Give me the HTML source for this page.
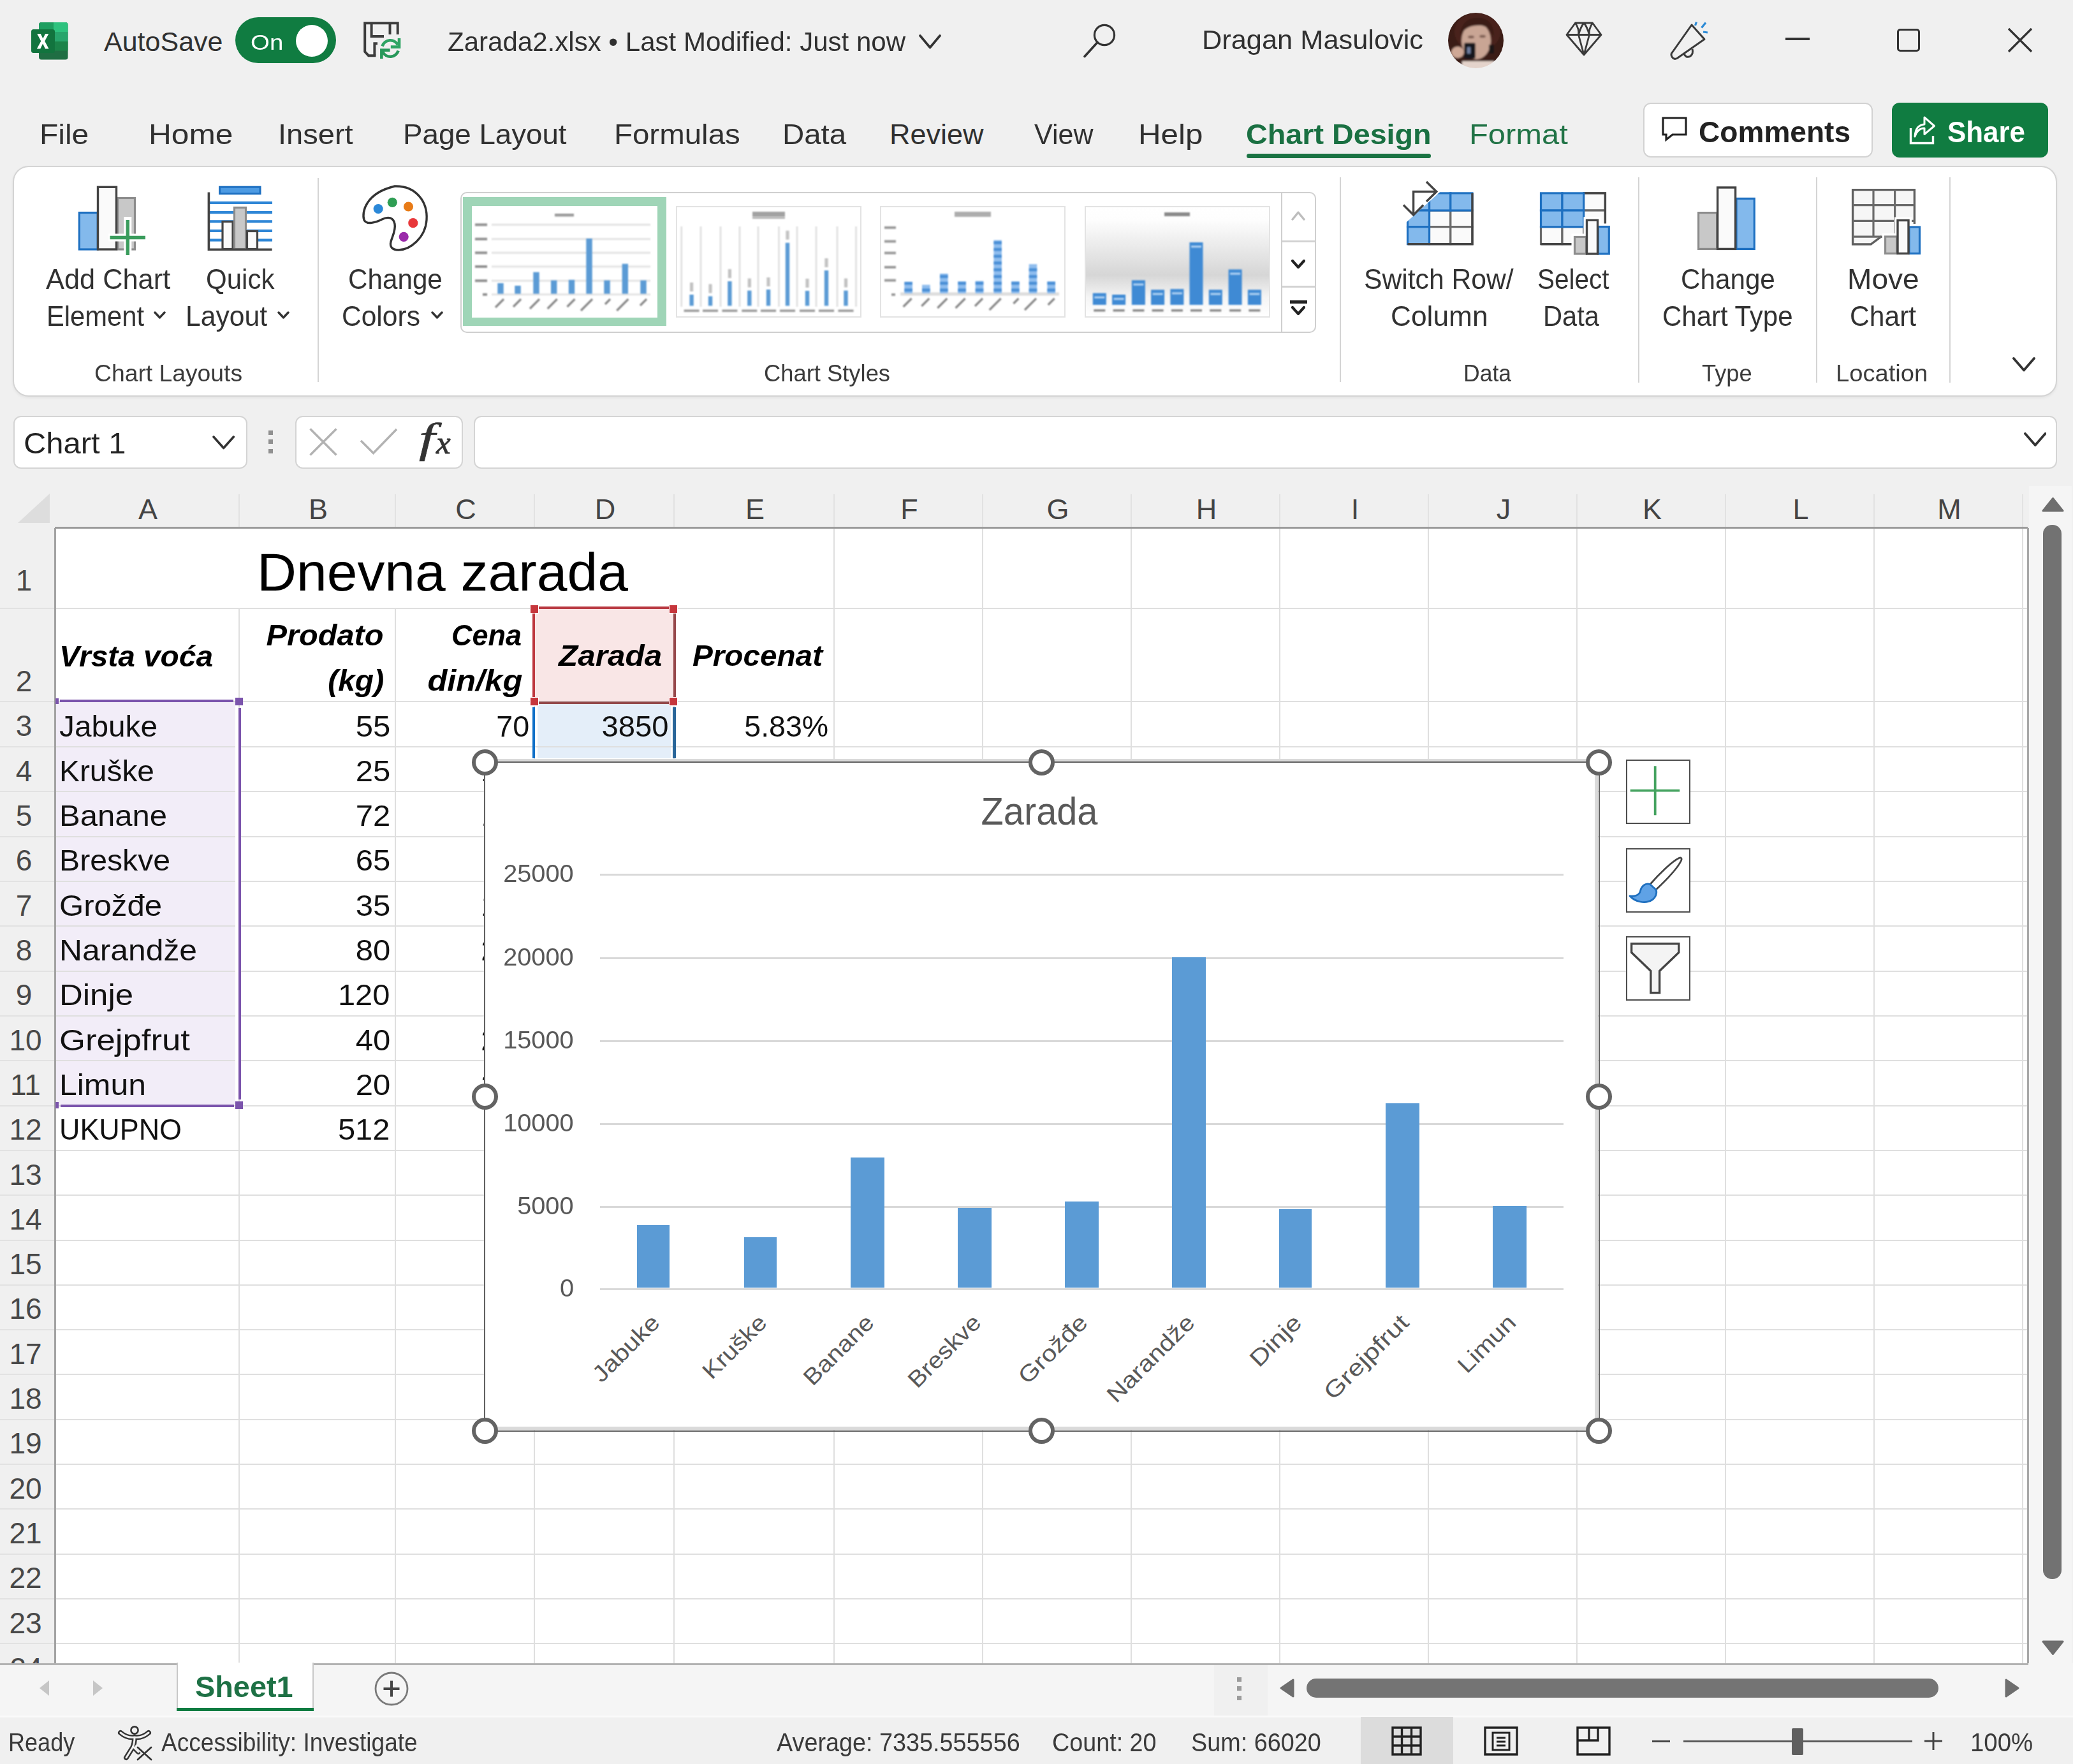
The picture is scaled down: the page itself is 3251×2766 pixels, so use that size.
<!DOCTYPE html>
<html><head><meta charset="utf-8"><title>Excel</title>
<style>
html,body{margin:0;padding:0;}
body{width:3251px;height:2766px;overflow:hidden;background:#f0f0f0;font-family:"Liberation Sans", sans-serif;position:relative;}
#root{position:absolute;left:0;top:0;width:3251px;height:2766px;overflow:hidden;}
#root div,#root svg{position:absolute;box-sizing:border-box;}
.t{position:absolute;white-space:nowrap;line-height:1em;}

</style></head><body><div id="root">
<svg style="left:48px;top:33.5px;" width="60" height="60" viewBox="0 0 60 60">
<path d="M17 1 H54.5 a4 4 0 0 1 4 4 V55.5 a4 4 0 0 1 -4 4 H17 a4 4 0 0 1 -4 -4 V5 a4 4 0 0 1 4 -4z" fill="#1f6e43"/>
<path d="M17 1 H36 V16 H13 V5 a4 4 0 0 1 4 -4z" fill="#1e9e60"/>
<path d="M36 1 H54.5 a4 4 0 0 1 4 4 V16 H36z" fill="#2ec27e"/>
<rect x="13" y="16" width="23" height="15" fill="#17874c"/>
<rect x="36" y="16" width="22.5" height="15" fill="#28a56c"/>
<rect x="13" y="31" width="23" height="14.5" fill="#136c3a"/>
<rect x="36" y="31" width="22.5" height="14.5" fill="#1b8349"/>
<rect x="1" y="12" width="37" height="37" rx="3.5" fill="#12743e"/>
<path d="M10.2 19 H15.8 L19.3 26.6 L23 19 H28.3 L22.2 30.5 L28.5 42.5 H23 L19.1 34.6 L15.3 42.5 H9.8 L16.3 30.4z" fill="#fff"/>
</svg><span class="t" id="t0" style="top:43.6px;font-size:43px;color:#303030;left:163.00px;">AutoSave</span><div style="left:369px;top:27px;width:158px;height:72px;border-radius:36px;background:#107c41;"></div><div style="left:464px;top:39px;width:50px;height:50px;border-radius:25px;background:#fff;"></div><span class="t" id="t1" style="top:49.2px;font-size:34px;color:#fff;left:392.87px;transform-origin:0 84.65%;transform:scaleX(1.1308);">On</span><svg style="left:569px;top:34px;" width="62" height="62" viewBox="0 0 62 62">
<path d="M54.7 20 V2.2 H3.2 V47 L9 53.2 H20.4" stroke="#3d3d3d" stroke-width="4" fill="none" stroke-linejoin="miter"/>
<path d="M13.6 2.2 V23 H33" stroke="#3d3d3d" stroke-width="4" fill="none"/>
<path d="M42.5 2.2 V20" stroke="#3d3d3d" stroke-width="4" fill="none"/>
<path d="M18.4 53.2 V34.3 H23" stroke="#3d3d3d" stroke-width="4" fill="none"/>
<path d="M30.6 38.5 A13.2 13.2 0 0 1 55 36.5" stroke="#2ea463" stroke-width="4.6" fill="none"/>
<path d="M57 26 V39.6 H43.8" stroke="#2ea463" stroke-width="4.6" fill="none"/>
<path d="M55.6 45.5 A13.2 13.2 0 0 1 31.2 47.5" stroke="#27985a" stroke-width="4.6" fill="none"/>
<path d="M29.4 58 V44.6 H42.6" stroke="#27985a" stroke-width="4.6" fill="none"/>
</svg><span class="t" id="t2" style="top:43.6px;font-size:43px;color:#303030;left:702.02px;transform-origin:0 84.65%;transform:scaleX(0.9777);">Zarada2.xlsx • Last Modified: Just now</span><svg style="left:1441px;top:53.5px;" width="35" height="24.5" viewBox="0 0 35 24.5"><path d="M2 2 L17.5 20.5 L33 2" stroke="#333" stroke-width="3.6" fill="none" stroke-linecap="round" stroke-linejoin="round"/></svg><svg style="left:1697px;top:33px;" width="56" height="58" viewBox="0 0 56 58"><circle cx="35" cy="22" r="15.6" stroke="#333" stroke-width="3.2" fill="none"/><path d="M24 33.5 L4 55.5" stroke="#333" stroke-width="3.6" stroke-linecap="round"/></svg><span class="t" id="t3" style="top:41.1px;font-size:43px;color:#303030;left:1885.47px;transform-origin:0 84.65%;transform:scaleX(1.0084);">Dragan Masulovic</span><svg style="left:2271.0px;top:19.700000000000003px;" width="87" height="87" viewBox="0 0 87 87"><defs><clipPath id="avc"><circle cx="43.5" cy="43.5" r="43.5"/></clipPath>
<filter id="avb"><feGaussianBlur stdDeviation="1.6"/></filter></defs>
<g clip-path="url(#avc)"><g filter="url(#avb)">
<rect x="-5" y="-5" width="97" height="97" fill="#3b1c18"/>
<ellipse cx="46" cy="30" rx="36" ry="30" fill="#4a241b"/>
<ellipse cx="44" cy="44" rx="23" ry="29" fill="#c9a594"/>
<path d="M18 36 Q22 6 48 8 Q72 8 72 40 Q64 18 46 20 Q28 20 18 36z" fill="#3a1b14"/>
<ellipse cx="36" cy="38" rx="5" ry="2.2" fill="#7a5a50"/><ellipse cx="54" cy="37" rx="5" ry="2.2" fill="#7a5a50"/>
<rect x="22" y="76" width="50" height="16" fill="#e4d3cb"/>
<ellipse cx="15" cy="62" rx="10" ry="9" fill="#cfa896"/>
<rect x="25" y="47" width="18" height="25" rx="3" fill="#15151d"/>
<rect x="30" y="54" width="5" height="10" fill="#6f7fa0"/>
<rect x="64" y="50" width="8" height="14" fill="#1d1414"/>
</g></g></svg><svg style="left:2455px;top:34px;" width="58" height="55" viewBox="0 0 58 55"><path d="M15.5 2 H42.5 L56 20.5 L29 52 L2 20.5 Z M2 20.5 H56 M15.5 2 Q22 12 20.5 20.5 L29 52 L37.5 20.5 Q36 12 42.5 2 M20.5 20.5 Q24 8 29 2 Q34 8 37.5 20.5" stroke="#3a3a3a" stroke-width="2.8" fill="none" stroke-linejoin="round"/></svg><svg style="left:2616px;top:28px;" width="70" height="70" viewBox="0 0 70 70"><path d="M37 11 L57 33.5 L14 63.5 Q9 66 6 61 Q3.5 57 7 53.5 Z" stroke="#3a3a3a" stroke-width="3" fill="none" stroke-linejoin="round"/>
<path d="M25 56 Q28 64 35 60 Q40 56 38 49" stroke="#3a3a3a" stroke-width="3" fill="none"/>
<path d="M42.5 12 L44.5 6.5 M52.5 15.5 L59 7.5 M55 22 L62 23" stroke="#2b8ad6" stroke-width="3.2" stroke-linecap="butt"/></svg><div style="left:2799.5px;top:59.4px;width:38px;height:3.4px;background:#333;"></div><div style="left:2975.3px;top:44.7px;width:35.4px;height:36.8px;border:3.2px solid #333;border-radius:5px;"></div><svg style="left:3146.8px;top:42.2px;" width="42" height="42" viewBox="0 0 42 42"><path d="M3 3 L39 39 M39 3 L3 39" stroke="#333" stroke-width="3.2" fill="none"/></svg><span class="t" id="t4" style="top:187.9px;font-size:45px;color:#303030;left:61.80px;transform-origin:0 84.65%;transform:scaleX(1.0660);">File</span><span class="t" id="t5" style="top:187.9px;font-size:45px;color:#303030;left:232.69px;transform-origin:0 84.65%;transform:scaleX(1.1034);">Home</span><span class="t" id="t6" style="top:187.9px;font-size:45px;color:#303030;left:435.82px;transform-origin:0 84.65%;transform:scaleX(1.0455);">Insert</span><span class="t" id="t7" style="top:187.9px;font-size:45px;color:#303030;left:631.95px;transform-origin:0 84.65%;transform:scaleX(1.0152);">Page Layout</span><span class="t" id="t8" style="top:187.9px;font-size:45px;color:#303030;left:962.84px;transform-origin:0 84.65%;transform:scaleX(1.0544);">Formulas</span><span class="t" id="t9" style="top:187.9px;font-size:45px;color:#303030;left:1226.84px;transform-origin:0 84.65%;transform:scaleX(1.0535);">Data</span><span class="t" id="t10" style="top:187.9px;font-size:45px;color:#303030;left:1395.00px;">Review</span><span class="t" id="t11" style="top:187.9px;font-size:45px;color:#303030;left:1622.00px;transform-origin:0 84.65%;transform:scaleX(0.9565);">View</span><span class="t" id="t12" style="top:187.9px;font-size:45px;color:#303030;left:1784.71px;transform-origin:0 84.65%;transform:scaleX(1.0958);">Help</span><span class="t" id="t13" style="top:187.9px;font-size:45px;color:#1a7042;font-weight:700;left:1953.96px;transform-origin:0 84.65%;transform:scaleX(1.0378);">Chart Design</span><div style="left:1955px;top:240.5px;width:289px;height:7px;background:#1a7343;border-radius:3.5px;"></div><span class="t" id="t14" style="top:187.9px;font-size:45px;color:#217346;left:2303.74px;transform-origin:0 84.65%;transform:scaleX(1.0856);">Format</span><div style="left:2577px;top:161px;width:360px;height:86px;background:#fff;border:2px solid #d2d2d2;border-radius:12px;"></div><svg style="left:2606px;top:183px;" width="42" height="40" viewBox="0 0 42 40"><path d="M2 2 H38 V28 H17 L7 36 V28 H2 Z" stroke="#222" stroke-width="3.2" fill="none" stroke-linejoin="miter"/></svg><span class="t" id="t15" style="top:182.7px;font-size:47px;color:#222;font-weight:700;left:2664.02px;transform-origin:0 84.65%;transform:scaleX(0.9803);">Comments</span><div style="left:2967px;top:161px;width:245px;height:86px;background:#107c41;border-radius:12px;"></div><svg style="left:2994px;top:181px;" width="44" height="48" viewBox="0 0 44 48"><path d="M2.5 20 V43.5 H37.5 V32" stroke="#fff" stroke-width="3.4" fill="none"/>
<path d="M9 33 Q10 15 24 14 V3 L39.5 16.5 L24 29.5 V20 Q13 20 9 33 Z" stroke="#fff" stroke-width="3" fill="none" stroke-linejoin="round"/></svg><span class="t" id="t16" style="top:182.7px;font-size:47px;color:#fff;font-weight:700;left:3054.37px;transform-origin:0 84.65%;transform:scaleX(0.9339);">Share</span><div style="left:20px;top:260px;width:3206.3px;height:362px;background:#fff;border:2px solid #d4d4d4;border-radius:25px;box-shadow:0 2px 4px rgba(0,0,0,0.06);"></div><svg style="left:115px;top:285px;" width="120" height="120" viewBox="115 285 120 120">
<rect x="184.5" y="310.5" width="27" height="80.5" fill="#c8c8c8" stroke="#8c8c8c" stroke-width="3.2"/>
<rect x="124.3" y="333.5" width="29" height="57.5" fill="#83b9ec" stroke="#1e70c1" stroke-width="3.2"/>
<rect x="153.5" y="293.3" width="29" height="97.7" fill="#fafafa" stroke="#444" stroke-width="3.4"/>
<path d="M200.3 340 V401 M170 372.5 H229" stroke="#fff" stroke-width="12" fill="none"/>
<path d="M200.3 345 V400 M172.5 372.5 H228" stroke="#3a9c5c" stroke-width="5.4" fill="none"/>
</svg><span class="t" id="t17" style="top:416.3px;font-size:44px;color:#323232;left:72.00px;transform-origin:0 84.65%;transform:scaleX(0.9854);">Add Chart</span><span class="t" id="t18" style="top:474.3px;font-size:44px;color:#323232;left:73.16px;transform-origin:0 84.65%;transform:scaleX(0.9482);">Element</span><svg style="left:241px;top:488px;" width="19" height="14" viewBox="0 0 19 14"><path d="M2 2 L9.5 10 L17 2" stroke="#333" stroke-width="3.4" fill="none" stroke-linecap="round" stroke-linejoin="round"/></svg><svg style="left:320px;top:285px;" width="115" height="115" viewBox="320 285 115 115"><rect x="329" y="315.8" width="98" height="4.2" fill="#2e86d6"/><rect x="329" y="331" width="98" height="4.2" fill="#2e86d6"/><rect x="329" y="345.2" width="98" height="4.2" fill="#2e86d6"/><rect x="329" y="359.8" width="98" height="4.2" fill="#2e86d6"/><rect x="329" y="374.4" width="98" height="4.2" fill="#2e86d6"/><rect x="344.5" y="293.2" width="63.5" height="10.5" fill="#4d9be3" stroke="#1e70c1" stroke-width="3"/><rect x="349" y="347.5" width="16" height="43" fill="#fafafa" stroke="#444" stroke-width="3.2"/><rect x="367.5" y="325.5" width="18" height="65" fill="#c8c8c8" stroke="#8c8c8c" stroke-width="3.2"/><rect x="387.5" y="362.5" width="16" height="28" fill="#fafafa" stroke="#444" stroke-width="3.2"/><path d="M327.4 301.5 V391.3 H426.6" stroke="#444" stroke-width="3.6" fill="none"/></svg><span class="t" id="t19" style="top:416.3px;font-size:44px;color:#323232;left:322.59px;transform-origin:0 84.65%;transform:scaleX(0.9554);">Quick</span><span class="t" id="t20" style="top:474.3px;font-size:44px;color:#323232;left:291.09px;transform-origin:0 84.65%;transform:scaleX(0.9699);">Layout</span><svg style="left:435px;top:488px;" width="19" height="14" viewBox="0 0 19 14"><path d="M2 2 L9.5 10 L17 2" stroke="#333" stroke-width="3.4" fill="none" stroke-linecap="round" stroke-linejoin="round"/></svg><span class="t" id="t21" style="top:567.5px;font-size:36px;color:#3b3b3b;left:147.96px;transform-origin:0 84.65%;transform:scaleX(1.0355);">Chart Layouts</span><div style="left:498px;top:279px;width:2px;height:320px;background:#d4d4d4;"></div><svg style="left:562px;top:287px;" width="112" height="112" viewBox="-5 -4 112 112">
<path d="M52 1 C86 0 104 26 102 54 C100 82 76 101 58 101 C48 101 44 96 46 88 C48 80 54 70 52 60 C50 50 42 48 32 53 C22 58 8 62 4 54 C0 42 6 12 52 1 Z" fill="#fff" stroke="#333" stroke-width="3.4" stroke-linejoin="round"/>
<circle cx="26.2" cy="36.5" r="7.6" fill="#2b88d8"/>
<circle cx="48.3" cy="26.3" r="7.6" fill="#2f9e54"/>
<circle cx="73.5" cy="33" r="7.6" fill="#e87b17"/>
<circle cx="80.8" cy="58.7" r="7.6" fill="#e8373a"/>
<circle cx="66.2" cy="80.3" r="7.6" fill="#9a2aaa"/>
</svg><span class="t" id="t22" style="top:416.3px;font-size:44px;color:#323232;left:545.58px;transform-origin:0 84.65%;transform:scaleX(0.9591);">Change</span><span class="t" id="t23" style="top:474.3px;font-size:44px;color:#323232;left:536.07px;transform-origin:0 84.65%;transform:scaleX(0.9666);">Colors</span><svg style="left:675.5px;top:488px;" width="19" height="14" viewBox="0 0 19 14"><path d="M2 2 L9.5 10 L17 2" stroke="#333" stroke-width="3.4" fill="none" stroke-linecap="round" stroke-linejoin="round"/></svg><div style="left:722px;top:301px;width:1342px;height:221px;background:#fff;border:2px solid #cfcfcf;border-radius:10px;"></div><div style="left:2009px;top:303px;width:2px;height:217px;background:#cfcfcf;"></div><div style="left:2010px;top:377px;width:53px;height:3px;background:#d2d2d2;"></div><div style="left:2010px;top:447.5px;width:53px;height:3px;background:#d2d2d2;"></div><svg style="left:2024.5px;top:331px;" width="22" height="17" viewBox="0 0 22 17"><path d="M2 13 L11.0 2 L20 13" stroke="#bdbdbd" stroke-width="3.4" fill="none" stroke-linecap="round" stroke-linejoin="round"/></svg><svg style="left:2024.5px;top:407px;" width="22" height="16" viewBox="0 0 22 16"><path d="M2 2 L11.0 12 L20 2" stroke="#222" stroke-width="4.2" fill="none" stroke-linecap="round" stroke-linejoin="round"/></svg><div style="left:2023px;top:470.5px;width:26.5px;height:5px;background:#222;"></div><svg style="left:2024.5px;top:480px;" width="22" height="16" viewBox="0 0 22 16"><path d="M2 2 L11.0 12 L20 2" stroke="#222" stroke-width="4.2" fill="none" stroke-linecap="round" stroke-linejoin="round"/></svg><div style="left:726px;top:309px;width:319px;height:202px;background:#9fd5b7;"></div><div style="left:740px;top:323px;width:291px;height:175px;background:#fff;"></div><svg style="left:740px;top:323px;filter:blur(1.3px);" width="291" height="175" viewBox="740 323 291 175"><rect x="870" y="335" width="30" height="4.5" fill="#9a9a9a"/><rect x="771" y="350.9" width="249" height="3" fill="#e3e3e3"/><rect x="771" y="373.3" width="249" height="3" fill="#e3e3e3"/><rect x="771" y="394.9" width="249" height="3" fill="#e3e3e3"/><rect x="771" y="416.5" width="249" height="3" fill="#e3e3e3"/><rect x="771" y="438.7" width="249" height="3" fill="#e3e3e3"/><rect x="771" y="460.3" width="249" height="3" fill="#e3e3e3"/><rect x="745" y="350.4" width="19" height="4" fill="#8f8f8f"/><rect x="745" y="372.8" width="19" height="4" fill="#8f8f8f"/><rect x="745" y="394.4" width="19" height="4" fill="#8f8f8f"/><rect x="745" y="416" width="19" height="4" fill="#8f8f8f"/><rect x="745" y="438.2" width="19" height="4" fill="#8f8f8f"/><rect x="757" y="459.8" width="7" height="4" fill="#8f8f8f"/><rect x="780.3" y="444" width="9.4" height="16.600000000000023" fill="#5b9bd5"/><path d="M790 469 l-13 13" stroke="#888" stroke-width="3.2"/><rect x="807.3" y="448" width="9.4" height="12.600000000000023" fill="#5b9bd5"/><path d="M817 469 l-12 12" stroke="#888" stroke-width="3.2"/><rect x="836.3" y="426.7" width="9.4" height="33.900000000000034" fill="#5b9bd5"/><path d="M846 469 l-15 15" stroke="#888" stroke-width="3.2"/><rect x="864.0" y="439.6" width="9.4" height="21.0" fill="#5b9bd5"/><path d="M873.7 469 l-15 15" stroke="#888" stroke-width="3.2"/><rect x="891.8" y="438.8" width="9.4" height="21.80000000000001" fill="#5b9bd5"/><path d="M901.5 469 l-12 12" stroke="#888" stroke-width="3.2"/><rect x="919.3" y="374" width="9.4" height="86.60000000000002" fill="#5b9bd5"/><path d="M929 469 l-18 18" stroke="#888" stroke-width="3.2"/><rect x="947.3" y="439.6" width="9.4" height="21.0" fill="#5b9bd5"/><path d="M957 469 l-8 8" stroke="#888" stroke-width="3.2"/><rect x="975.5999999999999" y="413.7" width="9.4" height="46.900000000000034" fill="#5b9bd5"/><path d="M985.3 469 l-18 18" stroke="#888" stroke-width="3.2"/><rect x="1004.3" y="439.6" width="9.4" height="21.0" fill="#5b9bd5"/><path d="M1014 469 l-10 10" stroke="#888" stroke-width="3.2"/></svg><div style="left:1060px;top:323px;width:291px;height:175px;background:#fff;border:2px solid #e3e3e3;"></div><svg style="left:1060px;top:323px;filter:blur(1.3px);" width="291" height="175" viewBox="1060 323 291 175"><rect x="1180" y="332" width="51" height="8" fill="#a2a2a2"/><rect x="1180" y="341" width="51" height="1.6" fill="#8a8a8a"/><rect x="1067.4" y="355" width="2.6" height="126" fill="#dedede"/><rect x="1097.7" y="355" width="2.6" height="126" fill="#dedede"/><rect x="1128.7" y="355" width="2.6" height="126" fill="#dedede"/><rect x="1158.7" y="355" width="2.6" height="126" fill="#dedede"/><rect x="1187.7" y="355" width="2.6" height="126" fill="#dedede"/><rect x="1220.2" y="355" width="2.6" height="126" fill="#dedede"/><rect x="1248.7" y="355" width="2.6" height="126" fill="#dedede"/><rect x="1278.7" y="355" width="2.6" height="126" fill="#dedede"/><rect x="1311.7" y="355" width="2.6" height="126" fill="#dedede"/><rect x="1341.2" y="355" width="2.6" height="126" fill="#dedede"/><rect x="1081.3999999999999" y="462" width="6.4" height="17.5" fill="#5b9bd5"/><rect x="1082.0" y="443" width="5.2" height="14" fill="#c2c2c2"/><rect x="1072.6" y="485.5" width="24" height="3.6" fill="#9a9a9a"/><rect x="1110.8" y="464.5" width="6.4" height="15.0" fill="#5b9bd5"/><rect x="1111.4" y="445.5" width="5.2" height="14" fill="#c2c2c2"/><rect x="1102" y="485.5" width="24" height="3.6" fill="#9a9a9a"/><rect x="1141.2" y="441" width="6.4" height="38.5" fill="#5b9bd5"/><rect x="1141.8000000000002" y="422" width="5.2" height="14" fill="#c2c2c2"/><rect x="1132.4" y="485.5" width="24" height="3.6" fill="#9a9a9a"/><rect x="1172.1" y="455.6" width="6.4" height="23.899999999999977" fill="#5b9bd5"/><rect x="1172.7" y="436.6" width="5.2" height="14" fill="#c2c2c2"/><rect x="1163.3" y="485.5" width="24" height="3.6" fill="#9a9a9a"/><rect x="1201.8" y="454" width="6.4" height="25.5" fill="#5b9bd5"/><rect x="1202.4" y="435" width="5.2" height="14" fill="#c2c2c2"/><rect x="1193" y="485.5" width="24" height="3.6" fill="#9a9a9a"/><rect x="1231.8" y="380.7" width="6.4" height="98.80000000000001" fill="#5b9bd5"/><rect x="1232.4" y="361.7" width="5.2" height="14" fill="#c2c2c2"/><rect x="1223" y="485.5" width="24" height="3.6" fill="#9a9a9a"/><rect x="1262.8" y="456" width="6.4" height="23.5" fill="#5b9bd5"/><rect x="1263.4" y="437" width="5.2" height="14" fill="#c2c2c2"/><rect x="1254" y="485.5" width="24" height="3.6" fill="#9a9a9a"/><rect x="1292.8" y="424" width="6.4" height="55.5" fill="#5b9bd5"/><rect x="1293.4" y="405" width="5.2" height="14" fill="#c2c2c2"/><rect x="1284" y="485.5" width="24" height="3.6" fill="#9a9a9a"/><rect x="1323.3" y="455.6" width="6.4" height="23.899999999999977" fill="#5b9bd5"/><rect x="1323.9" y="436.6" width="5.2" height="14" fill="#c2c2c2"/><rect x="1314.5" y="485.5" width="24" height="3.6" fill="#9a9a9a"/></svg><div style="left:1380px;top:323px;width:291px;height:175px;background:#fff;border:2px solid #e3e3e3;"></div><svg style="left:1380px;top:323px;filter:blur(1.3px);" width="291" height="175" viewBox="1380 323 291 175"><rect x="1497" y="332" width="57" height="8" fill="#adadad"/><rect x="1387" y="354.9" width="18" height="4" fill="#9a9a9a"/><rect x="1387" y="376.5" width="18" height="4" fill="#9a9a9a"/><rect x="1387" y="394.7" width="18" height="4" fill="#9a9a9a"/><rect x="1387" y="417" width="18" height="4" fill="#9a9a9a"/><rect x="1387" y="437.6" width="18" height="4" fill="#9a9a9a"/><rect x="1398" y="460" width="6" height="4" fill="#9a9a9a"/><rect x="1412" y="458.5" width="249" height="5" fill="#dcdcdc"/><rect x="1418.3" y="444.4" width="12.6" height="15.600000000000023" fill="#8fbdee"/><rect x="1418.3" y="452.5" width="12.6" height="4.6" fill="#4a8fd6"/><rect x="1418.3" y="441.9" width="12.6" height="4.6" fill="#4a8fd6"/><path d="M1429.6 468 l-13 13" stroke="#888" stroke-width="3.2"/><rect x="1446.0" y="446.6" width="12.6" height="13.399999999999977" fill="#8fbdee"/><rect x="1446.0" y="452.5" width="12.6" height="4.6" fill="#4a8fd6"/><path d="M1457.3 468 l-12 12" stroke="#888" stroke-width="3.2"/><rect x="1474.0" y="429" width="12.6" height="31" fill="#8fbdee"/><rect x="1474.0" y="452.5" width="12.6" height="4.6" fill="#4a8fd6"/><rect x="1474.0" y="441.9" width="12.6" height="4.6" fill="#4a8fd6"/><rect x="1474.0" y="431.29999999999995" width="12.6" height="4.6" fill="#4a8fd6"/><path d="M1485.3 468 l-15 15" stroke="#888" stroke-width="3.2"/><rect x="1502.3" y="441.2" width="12.6" height="18.80000000000001" fill="#8fbdee"/><rect x="1502.3" y="452.5" width="12.6" height="4.6" fill="#4a8fd6"/><rect x="1502.3" y="441.9" width="12.6" height="4.6" fill="#4a8fd6"/><path d="M1513.6 468 l-15 15" stroke="#888" stroke-width="3.2"/><rect x="1529.7" y="440.6" width="12.6" height="19.399999999999977" fill="#8fbdee"/><rect x="1529.7" y="452.5" width="12.6" height="4.6" fill="#4a8fd6"/><rect x="1529.7" y="441.9" width="12.6" height="4.6" fill="#4a8fd6"/><path d="M1541 468 l-12 12" stroke="#888" stroke-width="3.2"/><rect x="1558.4" y="376.6" width="12.6" height="83.39999999999998" fill="#8fbdee"/><rect x="1558.4" y="452.5" width="12.6" height="4.6" fill="#4a8fd6"/><rect x="1558.4" y="441.9" width="12.6" height="4.6" fill="#4a8fd6"/><rect x="1558.4" y="431.29999999999995" width="12.6" height="4.6" fill="#4a8fd6"/><rect x="1558.4" y="420.69999999999993" width="12.6" height="4.6" fill="#4a8fd6"/><rect x="1558.4" y="410.0999999999999" width="12.6" height="4.6" fill="#4a8fd6"/><rect x="1558.4" y="399.4999999999999" width="12.6" height="4.6" fill="#4a8fd6"/><rect x="1558.4" y="388.89999999999986" width="12.6" height="4.6" fill="#4a8fd6"/><rect x="1558.4" y="378.29999999999984" width="12.6" height="4.6" fill="#4a8fd6"/><path d="M1569.7 468 l-18 18" stroke="#888" stroke-width="3.2"/><rect x="1586.1000000000001" y="441.2" width="12.6" height="18.80000000000001" fill="#8fbdee"/><rect x="1586.1000000000001" y="452.5" width="12.6" height="4.6" fill="#4a8fd6"/><rect x="1586.1000000000001" y="441.9" width="12.6" height="4.6" fill="#4a8fd6"/><path d="M1597.4 468 l-8 8" stroke="#888" stroke-width="3.2"/><rect x="1613.7" y="414.2" width="12.6" height="45.80000000000001" fill="#8fbdee"/><rect x="1613.7" y="452.5" width="12.6" height="4.6" fill="#4a8fd6"/><rect x="1613.7" y="441.9" width="12.6" height="4.6" fill="#4a8fd6"/><rect x="1613.7" y="431.29999999999995" width="12.6" height="4.6" fill="#4a8fd6"/><rect x="1613.7" y="420.69999999999993" width="12.6" height="4.6" fill="#4a8fd6"/><path d="M1625 468 l-18 18" stroke="#888" stroke-width="3.2"/><rect x="1642.4" y="441.2" width="12.6" height="18.80000000000001" fill="#8fbdee"/><rect x="1642.4" y="452.5" width="12.6" height="4.6" fill="#4a8fd6"/><rect x="1642.4" y="441.9" width="12.6" height="4.6" fill="#4a8fd6"/><path d="M1653.7 468 l-10 10" stroke="#888" stroke-width="3.2"/></svg><div style="left:1701px;top:323px;width:291px;height:175px;background:linear-gradient(#fff 0%,#fdfdfd 12%,#d6d6d6 62%,#f4f4f4 82%,#fff 100%);border:2px solid #e3e3e3;"></div><svg style="left:1701px;top:323px;filter:blur(1.3px);" width="291" height="175" viewBox="1701 323 291 175"><rect x="1826" y="333" width="40" height="6" fill="#8a8a8a"/><rect x="1713.8" y="459.6" width="21" height="18.399999999999977" fill="#3f8ad4"/><rect x="1716.3" y="464.6" width="16" height="3.4" fill="#a9cdf1"/><rect x="1715.3" y="485" width="18" height="3.6" fill="#8a8a8a"/><rect x="1744.1" y="462" width="21" height="16" fill="#3f8ad4"/><rect x="1746.6" y="467" width="16" height="3.4" fill="#a9cdf1"/><rect x="1745.6" y="485" width="18" height="3.6" fill="#8a8a8a"/><rect x="1774.9" y="439.4" width="21" height="38.60000000000002" fill="#3f8ad4"/><rect x="1777.4" y="444.4" width="16" height="3.4" fill="#a9cdf1"/><rect x="1776.4" y="485" width="18" height="3.6" fill="#8a8a8a"/><rect x="1805.1" y="454.3" width="21" height="23.69999999999999" fill="#3f8ad4"/><rect x="1807.6" y="459.3" width="16" height="3.4" fill="#a9cdf1"/><rect x="1806.6" y="485" width="18" height="3.6" fill="#8a8a8a"/><rect x="1835.4" y="453.2" width="21" height="24.80000000000001" fill="#3f8ad4"/><rect x="1837.9" y="458.2" width="16" height="3.4" fill="#a9cdf1"/><rect x="1836.9" y="485" width="18" height="3.6" fill="#8a8a8a"/><rect x="1865.5" y="380" width="21" height="98" fill="#3f8ad4"/><rect x="1868" y="385" width="16" height="3.4" fill="#a9cdf1"/><rect x="1867" y="485" width="18" height="3.6" fill="#8a8a8a"/><rect x="1895.8" y="454.3" width="21" height="23.69999999999999" fill="#3f8ad4"/><rect x="1898.3" y="459.3" width="16" height="3.4" fill="#a9cdf1"/><rect x="1897.3" y="485" width="18" height="3.6" fill="#8a8a8a"/><rect x="1926.6" y="422.5" width="21" height="55.5" fill="#3f8ad4"/><rect x="1929.1" y="427.5" width="16" height="3.4" fill="#a9cdf1"/><rect x="1928.1" y="485" width="18" height="3.6" fill="#8a8a8a"/><rect x="1956.9" y="454.3" width="21" height="23.69999999999999" fill="#3f8ad4"/><rect x="1959.4" y="459.3" width="16" height="3.4" fill="#a9cdf1"/><rect x="1958.4" y="485" width="18" height="3.6" fill="#8a8a8a"/></svg><span class="t" id="t24" style="top:567.5px;font-size:36px;color:#3b3b3b;left:1197.99px;transform-origin:0 84.65%;transform:scaleX(1.0100);">Chart Styles</span><div style="left:2101px;top:278px;width:2px;height:321px;background:#d4d4d4;"></div><svg style="left:2190px;top:280px;" width="130" height="110" viewBox="2190 280 130 110"><rect x="2241.5" y="330" width="33.30000000000018" height="25.69999999999999" fill="#fafafa" stroke="#6a6a6a" stroke-width="3.2"/><rect x="2274.8" y="330" width="34.19999999999982" height="25.69999999999999" fill="#fafafa" stroke="#6a6a6a" stroke-width="3.2"/><rect x="2241.5" y="355.7" width="33.30000000000018" height="27.0" fill="#fafafa" stroke="#6a6a6a" stroke-width="3.2"/><rect x="2274.8" y="355.7" width="34.19999999999982" height="27.0" fill="#fafafa" stroke="#6a6a6a" stroke-width="3.2"/><rect x="2241.5" y="302.9" width="33.30000000000018" height="27.100000000000023" fill="#83b9ec" stroke="#1e70c1" stroke-width="3.2"/><rect x="2274.8" y="302.9" width="34.19999999999982" height="27.100000000000023" fill="#83b9ec" stroke="#1e70c1" stroke-width="3.2"/><rect x="2207.5" y="302.9" width="34.0" height="27.100000000000023" fill="#83b9ec" stroke="#1e70c1" stroke-width="3.2"/><rect x="2207.5" y="330" width="34.0" height="25.69999999999999" fill="#83b9ec" stroke="#1e70c1" stroke-width="3.2"/><rect x="2207.5" y="355.7" width="34.0" height="27.0" fill="#83b9ec" stroke="#1e70c1" stroke-width="3.2"/><path d="M2207.5 382.7 H2309 V302.9" stroke="#444" stroke-width="3.4" fill="none"/><path d="M2195 358 L2266 294 L2266 270 L2185 270 L2185 358 Z" fill="#fff"/><path d="M2216.6 336 V300.5 H2252" stroke="#444" stroke-width="3.4" fill="none"/><path d="M2201 321.5 L2216.6 337 L2232.2 321.5 M2237 285 L2252.8 300.5 L2237 316" stroke="#444" stroke-width="3.4" fill="none"/></svg><span class="t" id="t25" style="top:416.3px;font-size:44px;color:#323232;left:2138.56px;transform-origin:0 84.65%;transform:scaleX(0.9695);">Switch Row/</span><span class="t" id="t26" style="top:474.3px;font-size:44px;color:#323232;left:2181.49px;transform-origin:0 84.65%;transform:scaleX(1.0058);">Column</span><svg style="left:2405px;top:290px;" width="130" height="120" viewBox="2405 290 130 120"><rect x="2483.6" y="302.9" width="33.80000000000018" height="27.100000000000023" fill="#fafafa" stroke="#6a6a6a" stroke-width="3.2"/><rect x="2483.6" y="330" width="33.80000000000018" height="25.69999999999999" fill="#fafafa" stroke="#6a6a6a" stroke-width="3.2"/><rect x="2416.5" y="355.7" width="33.5" height="27.0" fill="#fafafa" stroke="#6a6a6a" stroke-width="3.2"/><rect x="2450" y="355.7" width="33.59999999999991" height="27.0" fill="#fafafa" stroke="#6a6a6a" stroke-width="3.2"/><rect x="2483.6" y="355.7" width="33.80000000000018" height="27.0" fill="#fafafa" stroke="#6a6a6a" stroke-width="3.2"/><path d="M2416.5 382.7 H2517.4 V302.9 H2483" stroke="#444" stroke-width="3.4" fill="none"/><rect x="2416.5" y="302.9" width="33.5" height="27.100000000000023" fill="#83b9ec" stroke="#1e70c1" stroke-width="3.2"/><rect x="2450" y="302.9" width="33.59999999999991" height="27.100000000000023" fill="#83b9ec" stroke="#1e70c1" stroke-width="3.2"/><rect x="2416.5" y="330" width="33.5" height="25.69999999999999" fill="#83b9ec" stroke="#1e70c1" stroke-width="3.2"/><rect x="2450" y="330" width="33.59999999999991" height="25.69999999999999" fill="#83b9ec" stroke="#1e70c1" stroke-width="3.2"/><path d="M2464.5 402 V366.5 H2483.5 V340.3 H2510.5 V350.5 H2529 V402 Z" fill="#fff"/><rect x="2469.5" y="371.5" width="18" height="26.5" fill="#c8c8c8" stroke="#8c8c8c" stroke-width="3.2"/><rect x="2506.3" y="355.5" width="17" height="42.5" fill="#83b9ec" stroke="#1e70c1" stroke-width="3.2"/><rect x="2488.5" y="345.3" width="17" height="52.7" fill="#fafafa" stroke="#444" stroke-width="3.4"/></svg><span class="t" id="t27" style="top:416.3px;font-size:44px;color:#323232;left:2410.66px;transform-origin:0 84.65%;transform:scaleX(0.9203);">Select</span><span class="t" id="t28" style="top:474.3px;font-size:44px;color:#323232;left:2420.16px;transform-origin:0 84.65%;transform:scaleX(0.9451);">Data</span><span class="t" id="t29" style="top:568.0px;font-size:36px;color:#3b3b3b;left:2294.53px;transform-origin:0 84.65%;transform:scaleX(0.9864);">Data</span><div style="left:2569px;top:278px;width:2px;height:322px;background:#d4d4d4;"></div><svg style="left:2655px;top:285px;" width="105" height="115" viewBox="2655 285 105 115">
<rect x="2663.6" y="333.6" width="29" height="56.8" fill="#c8c8c8" stroke="#8c8c8c" stroke-width="3.2"/>
<rect x="2723" y="311.4" width="28.3" height="79" fill="#83b9ec" stroke="#1e70c1" stroke-width="3.2"/>
<rect x="2693.6" y="294" width="28" height="96.4" fill="#fafafa" stroke="#444" stroke-width="3.4"/>
</svg><span class="t" id="t30" style="top:416.3px;font-size:44px;color:#323232;left:2635.58px;transform-origin:0 84.65%;transform:scaleX(0.9591);">Change</span><span class="t" id="t31" style="top:474.3px;font-size:44px;color:#323232;left:2607.09px;transform-origin:0 84.65%;transform:scaleX(0.9540);">Chart Type</span><span class="t" id="t32" style="top:567.5px;font-size:36px;color:#3b3b3b;left:2668.50px;transform-origin:0 84.65%;transform:scaleX(1.0062);">Type</span><div style="left:2848px;top:278px;width:2px;height:322px;background:#d4d4d4;"></div><svg style="left:2895px;top:288px;" width="125" height="120" viewBox="2895 288 125 120"><path d="M2905.6 297.6 H3002.4 V371.2 H2950 L2934 383 H2905.6 Z" fill="#f6f6f6" stroke="#5f5f5f" stroke-width="3.4"/><path d="M2905.6 321.6 H3002.4 M2905.6 346.4 H3002.4 M2905.6 371.2 H2950 M2938 297.6 V371.2 M2971.6 297.6 V371.2" stroke="#6a6a6a" stroke-width="3.2" fill="none"/><path d="M2951.6 402 V366 H2971 V340.5 H2998 V351 H3015.5 V402 Z" fill="#fff"/><rect x="2956.6" y="371" width="18" height="26.5" fill="#c8c8c8" stroke="#8c8c8c" stroke-width="3.2"/><rect x="2994" y="356" width="16.5" height="41.5" fill="#83b9ec" stroke="#1e70c1" stroke-width="3.2"/><rect x="2976" y="345.5" width="17" height="52" fill="#fafafa" stroke="#444" stroke-width="3.4"/></svg><span class="t" id="t33" style="top:416.3px;font-size:44px;color:#323232;left:2896.86px;transform-origin:0 84.65%;transform:scaleX(1.0473);">Move</span><span class="t" id="t34" style="top:474.3px;font-size:44px;color:#323232;left:2901.06px;transform-origin:0 84.65%;transform:scaleX(0.9680);">Chart</span><span class="t" id="t35" style="top:567.5px;font-size:36px;color:#3b3b3b;left:2878.88px;transform-origin:0 84.65%;transform:scaleX(1.0599);">Location</span><div style="left:3056.5px;top:278px;width:2px;height:322px;background:#d4d4d4;"></div><svg style="left:3155.5px;top:559.5px;" width="36" height="24.5" viewBox="0 0 36 24.5"><path d="M2 2 L18.0 20.5 L34 2" stroke="#333" stroke-width="3.8" fill="none" stroke-linecap="round" stroke-linejoin="round"/></svg><div style="left:21px;top:652px;width:366.5px;height:83px;background:#fff;border:2px solid #d4d4d4;border-radius:12px;"></div><span class="t" id="t36" style="top:671.6px;font-size:46.5px;color:#222;left:36.90px;transform-origin:0 84.65%;transform:scaleX(1.0516);">Chart 1</span><svg style="left:332.8px;top:683.3px;" width="35.3" height="23.5" viewBox="0 0 35.3 23.5"><path d="M2 2 L17.65 19.5 L33.3 2" stroke="#333" stroke-width="3.6" fill="none" stroke-linecap="round" stroke-linejoin="round"/></svg><div style="left:421.3px;top:674.5px;width:7px;height:7px;background:#909090;"></div><div style="left:421.3px;top:689.1px;width:7px;height:7px;background:#909090;"></div><div style="left:421.3px;top:703.9px;width:7px;height:7px;background:#909090;"></div><div style="left:463px;top:652px;width:263px;height:83px;background:#fff;border:2px solid #d4d4d4;border-radius:12px;"></div><svg style="left:484px;top:670px;" width="46" height="46" viewBox="0 0 46 46"><path d="M2.5 2.5 L43.5 43.5 M43.5 2.5 L2.5 43.5" stroke="#b2b2b2" stroke-width="3.4" fill="none"/></svg><svg style="left:562px;top:668px;" width="66" height="50" viewBox="0 0 66 50"><path d="M4 23 L23.5 42.5 L60 5" stroke="#b2b2b2" stroke-width="3.4" fill="none"/></svg><span class="t" style="left:657px;top:653.5px;font-family:'Liberation Serif',serif;font-style:italic;-webkit-text-stroke:0.6px #333;font-size:66px;color:#333;transform-origin:0 50%;transform:scaleX(1.38);">f</span><span class="t" style="left:684px;top:668.5px;font-family:'Liberation Serif',serif;font-style:italic;-webkit-text-stroke:0.9px #333;font-size:51px;color:#333;">x</span><div style="left:743px;top:652px;width:2483.3px;height:83px;background:#fff;border:2px solid #d4d4d4;border-radius:12px;"></div><svg style="left:3173.5px;top:677.5px;" width="35.5" height="24" viewBox="0 0 35.5 24"><path d="M2 2 L17.75 20 L33.5 2" stroke="#333" stroke-width="3.8" fill="none" stroke-linecap="round" stroke-linejoin="round"/></svg><div style="left:86px;top:829px;width:3094px;height:1779px;background:#fff;"></div><div style="left:0px;top:765px;width:3180px;height:63px;background:#f0f0f0;"></div><div style="left:0px;top:828px;width:86px;height:1780px;background:#f0f0f0;"></div><svg style="left:26px;top:772px;" width="54" height="50" viewBox="0 0 54 50"><path d="M52 2 V48 H2 Z" fill="#dddddd"/></svg><div style="left:87px;top:1100px;width:282px;height:632px;background:#f2edf8;"></div><div style="left:838px;top:954px;width:219px;height:146px;background:#f9e6e6;"></div><div style="left:842.7px;top:1103px;width:209px;height:86px;background:#e4eef9;"></div><div style="left:86px;top:953px;width:3094px;height:2px;background:#dfdfdf;"></div><div style="left:0px;top:953px;width:86px;height:2px;background:#e2e2e2;"></div><div style="left:86px;top:1099px;width:3094px;height:2px;background:#dfdfdf;"></div><div style="left:0px;top:1099px;width:86px;height:2px;background:#e2e2e2;"></div><div style="left:86px;top:1170px;width:3094px;height:2px;background:#dfdfdf;"></div><div style="left:0px;top:1170px;width:86px;height:2px;background:#e2e2e2;"></div><div style="left:86px;top:1240px;width:3094px;height:2px;background:#dfdfdf;"></div><div style="left:0px;top:1240px;width:86px;height:2px;background:#e2e2e2;"></div><div style="left:86px;top:1311px;width:3094px;height:2px;background:#dfdfdf;"></div><div style="left:0px;top:1311px;width:86px;height:2px;background:#e2e2e2;"></div><div style="left:86px;top:1381px;width:3094px;height:2px;background:#dfdfdf;"></div><div style="left:0px;top:1381px;width:86px;height:2px;background:#e2e2e2;"></div><div style="left:86px;top:1451px;width:3094px;height:2px;background:#dfdfdf;"></div><div style="left:0px;top:1451px;width:86px;height:2px;background:#e2e2e2;"></div><div style="left:86px;top:1522px;width:3094px;height:2px;background:#dfdfdf;"></div><div style="left:0px;top:1522px;width:86px;height:2px;background:#e2e2e2;"></div><div style="left:86px;top:1592px;width:3094px;height:2px;background:#dfdfdf;"></div><div style="left:0px;top:1592px;width:86px;height:2px;background:#e2e2e2;"></div><div style="left:86px;top:1662px;width:3094px;height:2px;background:#dfdfdf;"></div><div style="left:0px;top:1662px;width:86px;height:2px;background:#e2e2e2;"></div><div style="left:86px;top:1733px;width:3094px;height:2px;background:#dfdfdf;"></div><div style="left:0px;top:1733px;width:86px;height:2px;background:#e2e2e2;"></div><div style="left:86px;top:1803px;width:3094px;height:2px;background:#dfdfdf;"></div><div style="left:0px;top:1803px;width:86px;height:2px;background:#e2e2e2;"></div><div style="left:86px;top:1873px;width:3094px;height:2px;background:#dfdfdf;"></div><div style="left:0px;top:1873px;width:86px;height:2px;background:#e2e2e2;"></div><div style="left:86px;top:1944px;width:3094px;height:2px;background:#dfdfdf;"></div><div style="left:0px;top:1944px;width:86px;height:2px;background:#e2e2e2;"></div><div style="left:86px;top:2014px;width:3094px;height:2px;background:#dfdfdf;"></div><div style="left:0px;top:2014px;width:86px;height:2px;background:#e2e2e2;"></div><div style="left:86px;top:2084px;width:3094px;height:2px;background:#dfdfdf;"></div><div style="left:0px;top:2084px;width:86px;height:2px;background:#e2e2e2;"></div><div style="left:86px;top:2154px;width:3094px;height:2px;background:#dfdfdf;"></div><div style="left:0px;top:2154px;width:86px;height:2px;background:#e2e2e2;"></div><div style="left:86px;top:2225px;width:3094px;height:2px;background:#dfdfdf;"></div><div style="left:0px;top:2225px;width:86px;height:2px;background:#e2e2e2;"></div><div style="left:86px;top:2295px;width:3094px;height:2px;background:#dfdfdf;"></div><div style="left:0px;top:2295px;width:86px;height:2px;background:#e2e2e2;"></div><div style="left:86px;top:2365px;width:3094px;height:2px;background:#dfdfdf;"></div><div style="left:0px;top:2365px;width:86px;height:2px;background:#e2e2e2;"></div><div style="left:86px;top:2436px;width:3094px;height:2px;background:#dfdfdf;"></div><div style="left:0px;top:2436px;width:86px;height:2px;background:#e2e2e2;"></div><div style="left:86px;top:2506px;width:3094px;height:2px;background:#dfdfdf;"></div><div style="left:0px;top:2506px;width:86px;height:2px;background:#e2e2e2;"></div><div style="left:86px;top:2576px;width:3094px;height:2px;background:#dfdfdf;"></div><div style="left:0px;top:2576px;width:86px;height:2px;background:#e2e2e2;"></div><div style="left:374px;top:954px;width:2px;height:1654px;background:#dfdfdf;"></div><div style="left:374px;top:775px;width:2px;height:53px;background:#e2e2e2;"></div><div style="left:619px;top:954px;width:2px;height:1654px;background:#dfdfdf;"></div><div style="left:619px;top:775px;width:2px;height:53px;background:#e2e2e2;"></div><div style="left:837px;top:954px;width:2px;height:1654px;background:#dfdfdf;"></div><div style="left:837px;top:775px;width:2px;height:53px;background:#e2e2e2;"></div><div style="left:1056px;top:954px;width:2px;height:1654px;background:#dfdfdf;"></div><div style="left:1056px;top:775px;width:2px;height:53px;background:#e2e2e2;"></div><div style="left:1307px;top:829px;width:2px;height:1779px;background:#dfdfdf;"></div><div style="left:1307px;top:775px;width:2px;height:53px;background:#e2e2e2;"></div><div style="left:1540px;top:829px;width:2px;height:1779px;background:#dfdfdf;"></div><div style="left:1540px;top:775px;width:2px;height:53px;background:#e2e2e2;"></div><div style="left:1773px;top:829px;width:2px;height:1779px;background:#dfdfdf;"></div><div style="left:1773px;top:775px;width:2px;height:53px;background:#e2e2e2;"></div><div style="left:2006px;top:829px;width:2px;height:1779px;background:#dfdfdf;"></div><div style="left:2006px;top:775px;width:2px;height:53px;background:#e2e2e2;"></div><div style="left:2239px;top:829px;width:2px;height:1779px;background:#dfdfdf;"></div><div style="left:2239px;top:775px;width:2px;height:53px;background:#e2e2e2;"></div><div style="left:2472px;top:829px;width:2px;height:1779px;background:#dfdfdf;"></div><div style="left:2472px;top:775px;width:2px;height:53px;background:#e2e2e2;"></div><div style="left:2705px;top:829px;width:2px;height:1779px;background:#dfdfdf;"></div><div style="left:2705px;top:775px;width:2px;height:53px;background:#e2e2e2;"></div><div style="left:2938px;top:829px;width:2px;height:1779px;background:#dfdfdf;"></div><div style="left:2938px;top:775px;width:2px;height:53px;background:#e2e2e2;"></div><div style="left:3171px;top:829px;width:2px;height:1779px;background:#dfdfdf;"></div><div style="left:3171px;top:775px;width:2px;height:53px;background:#e2e2e2;"></div><div style="left:86px;top:826px;width:3094px;height:3px;background:#9b9b9b;"></div><div style="left:85px;top:828px;width:2.6px;height:1780px;background:#a2a2a2;"></div><div style="left:3179px;top:828px;width:3px;height:1780px;background:#a8a8a8;"></div><span class="t" id="t37" style="top:776.1px;font-size:45px;color:#444;left:232.00px;transform-origin:50% 84.65%;transform:translateX(-50%);">A</span><span class="t" id="t38" style="top:776.1px;font-size:45px;color:#444;left:499.00px;transform-origin:50% 84.65%;transform:translateX(-50%);">B</span><span class="t" id="t39" style="top:776.1px;font-size:45px;color:#444;left:730.50px;transform-origin:50% 84.65%;transform:translateX(-50%);">C</span><span class="t" id="t40" style="top:776.1px;font-size:45px;color:#444;left:949.00px;transform-origin:50% 84.65%;transform:translateX(-50%);">D</span><span class="t" id="t41" style="top:776.1px;font-size:45px;color:#444;left:1184.00px;transform-origin:50% 84.65%;transform:translateX(-50%);">E</span><span class="t" id="t42" style="top:776.1px;font-size:45px;color:#444;left:1426.00px;transform-origin:50% 84.65%;transform:translateX(-50%);">F</span><span class="t" id="t43" style="top:776.1px;font-size:45px;color:#444;left:1659.00px;transform-origin:50% 84.65%;transform:translateX(-50%);">G</span><span class="t" id="t44" style="top:776.1px;font-size:45px;color:#444;left:1892.00px;transform-origin:50% 84.65%;transform:translateX(-50%);">H</span><span class="t" id="t45" style="top:776.1px;font-size:45px;color:#444;left:2125.00px;transform-origin:50% 84.65%;transform:translateX(-50%);">I</span><span class="t" id="t46" style="top:776.1px;font-size:45px;color:#444;left:2358.00px;transform-origin:50% 84.65%;transform:translateX(-50%);">J</span><span class="t" id="t47" style="top:776.1px;font-size:45px;color:#444;left:2591.00px;transform-origin:50% 84.65%;transform:translateX(-50%);">K</span><span class="t" id="t48" style="top:776.1px;font-size:45px;color:#444;left:2824.00px;transform-origin:50% 84.65%;transform:translateX(-50%);">L</span><span class="t" id="t49" style="top:776.1px;font-size:45px;color:#444;left:3057.00px;transform-origin:50% 84.65%;transform:translateX(-50%);">M</span><span class="t" id="t50" style="top:887.4px;font-size:46px;color:#484848;left:37.60px;transform-origin:50% 84.65%;transform:translateX(-50%);">1</span><span class="t" id="t51" style="top:1045.1px;font-size:46px;color:#484848;left:37.60px;transform-origin:50% 84.65%;transform:translateX(-50%);">2</span><span class="t" id="t52" style="top:1115.4px;font-size:46px;color:#484848;left:37.60px;transform-origin:50% 84.65%;transform:translateX(-50%);">3</span><span class="t" id="t53" style="top:1185.7px;font-size:46px;color:#484848;left:37.60px;transform-origin:50% 84.65%;transform:translateX(-50%);">4</span><span class="t" id="t54" style="top:1256.0px;font-size:46px;color:#484848;left:37.60px;transform-origin:50% 84.65%;transform:translateX(-50%);">5</span><span class="t" id="t55" style="top:1326.3px;font-size:46px;color:#484848;left:37.60px;transform-origin:50% 84.65%;transform:translateX(-50%);">6</span><span class="t" id="t56" style="top:1396.6px;font-size:46px;color:#484848;left:37.60px;transform-origin:50% 84.65%;transform:translateX(-50%);">7</span><span class="t" id="t57" style="top:1466.9px;font-size:46px;color:#484848;left:37.60px;transform-origin:50% 84.65%;transform:translateX(-50%);">8</span><span class="t" id="t58" style="top:1537.2px;font-size:46px;color:#484848;left:37.60px;transform-origin:50% 84.65%;transform:translateX(-50%);">9</span><span class="t" id="t59" style="top:1607.5px;font-size:46px;color:#484848;left:40.00px;transform-origin:50% 84.65%;transform:translateX(-50%);">10</span><span class="t" id="t60" style="top:1677.8px;font-size:46px;color:#484848;left:40.00px;transform-origin:50% 84.65%;transform:translateX(-50%);">11</span><span class="t" id="t61" style="top:1748.2px;font-size:46px;color:#484848;left:40.00px;transform-origin:50% 84.65%;transform:translateX(-50%);">12</span><span class="t" id="t62" style="top:1818.5px;font-size:46px;color:#484848;left:40.00px;transform-origin:50% 84.65%;transform:translateX(-50%);">13</span><span class="t" id="t63" style="top:1888.8px;font-size:46px;color:#484848;left:40.00px;transform-origin:50% 84.65%;transform:translateX(-50%);">14</span><span class="t" id="t64" style="top:1959.1px;font-size:46px;color:#484848;left:40.00px;transform-origin:50% 84.65%;transform:translateX(-50%);">15</span><span class="t" id="t65" style="top:2029.4px;font-size:46px;color:#484848;left:40.00px;transform-origin:50% 84.65%;transform:translateX(-50%);">16</span><span class="t" id="t66" style="top:2099.7px;font-size:46px;color:#484848;left:40.00px;transform-origin:50% 84.65%;transform:translateX(-50%);">17</span><span class="t" id="t67" style="top:2170.0px;font-size:46px;color:#484848;left:40.00px;transform-origin:50% 84.65%;transform:translateX(-50%);">18</span><span class="t" id="t68" style="top:2240.3px;font-size:46px;color:#484848;left:40.00px;transform-origin:50% 84.65%;transform:translateX(-50%);">19</span><span class="t" id="t69" style="top:2310.6px;font-size:46px;color:#484848;left:40.00px;transform-origin:50% 84.65%;transform:translateX(-50%);">20</span><span class="t" id="t70" style="top:2380.9px;font-size:46px;color:#484848;left:40.00px;transform-origin:50% 84.65%;transform:translateX(-50%);">21</span><span class="t" id="t71" style="top:2451.3px;font-size:46px;color:#484848;left:40.00px;transform-origin:50% 84.65%;transform:translateX(-50%);">22</span><span class="t" id="t72" style="top:2521.6px;font-size:46px;color:#484848;left:40.00px;transform-origin:50% 84.65%;transform:translateX(-50%);">23</span><div style="left:0;top:2580px;width:86px;height:28px;overflow:hidden;"><span class="t" style="left:15.5px;top:13.0px;font-size:46px;color:#484848;">24</span></div><span class="t" id="t73" style="top:855.7px;font-size:83px;color:#000;left:403.00px;transform-origin:0 84.65%;transform:scaleX(1.0339);">Dnevna zarada</span><span class="t" id="t74" style="top:1004.7px;font-size:47px;color:#000;font-weight:700;font-style:italic;left:92.50px;transform-origin:0 84.65%;transform:scaleX(1.0173);">Vrsta voća</span><span class="t" id="t75" style="top:972.2px;font-size:47px;color:#000;font-weight:700;font-style:italic;right:2649.00px;transform-origin:100% 84.65%;transform:scaleX(1.0363);">Prodato</span><span class="t" id="t76" style="top:1043.2px;font-size:47px;color:#000;font-weight:700;font-style:italic;right:2649.00px;transform-origin:100% 84.65%;transform:scaleX(1.0215);">(kg)</span><span class="t" id="t77" style="top:972.2px;font-size:47px;color:#000;font-weight:700;font-style:italic;right:2433.00px;transform-origin:100% 84.65%;transform:scaleX(0.9571);">Cena</span><span class="t" id="t78" style="top:1043.2px;font-size:47px;color:#000;font-weight:700;font-style:italic;right:2431.50px;transform-origin:100% 84.65%;transform:scaleX(1.0767);">din/kg</span><span class="t" id="t79" style="top:1004.2px;font-size:47px;color:#000;font-weight:700;font-style:italic;right:2212.50px;transform-origin:100% 84.65%;transform:scaleX(1.0511);">Zarada</span><span class="t" id="t80" style="top:1004.2px;font-size:47px;color:#000;font-weight:700;font-style:italic;left:1086.00px;transform-origin:0 84.65%;transform:scaleX(1.0143);">Procenat</span><span class="t" id="t81" style="top:1114.5px;font-size:47px;color:#111;left:92.50px;transform-origin:0 84.65%;transform:scaleX(1.0161);">Jabuke</span><span class="t" id="t82" style="top:1114.5px;font-size:47px;color:#111;right:2639.20px;transform-origin:100% 84.65%;transform:scaleX(1.0425);">55</span><span class="t" id="t83" style="top:1184.8px;font-size:47px;color:#111;left:92.50px;transform-origin:0 84.65%;transform:scaleX(1.0186);">Kruške</span><span class="t" id="t84" style="top:1184.8px;font-size:47px;color:#111;right:2639.20px;transform-origin:100% 84.65%;transform:scaleX(1.0425);">25</span><span class="t" id="t85" style="top:1255.1px;font-size:47px;color:#111;left:92.50px;transform-origin:0 84.65%;transform:scaleX(1.0429);">Banane</span><span class="t" id="t86" style="top:1255.1px;font-size:47px;color:#111;right:2639.20px;transform-origin:100% 84.65%;transform:scaleX(1.0425);">72</span><span class="t" id="t87" style="top:1325.4px;font-size:47px;color:#111;left:92.50px;transform-origin:0 84.65%;transform:scaleX(1.0249);">Breskve</span><span class="t" id="t88" style="top:1325.4px;font-size:47px;color:#111;right:2639.20px;transform-origin:100% 84.65%;transform:scaleX(1.0425);">65</span><span class="t" id="t89" style="top:1395.8px;font-size:47px;color:#111;left:92.50px;transform-origin:0 84.65%;transform:scaleX(1.0446);">Grožđe</span><span class="t" id="t90" style="top:1395.8px;font-size:47px;color:#111;right:2639.20px;transform-origin:100% 84.65%;transform:scaleX(1.0425);">35</span><span class="t" id="t91" style="top:1466.1px;font-size:47px;color:#111;left:92.50px;transform-origin:0 84.65%;transform:scaleX(1.0599);">Narandže</span><span class="t" id="t92" style="top:1466.1px;font-size:47px;color:#111;right:2639.20px;transform-origin:100% 84.65%;transform:scaleX(1.0425);">80</span><span class="t" id="t93" style="top:1536.4px;font-size:47px;color:#111;left:92.50px;transform-origin:0 84.65%;transform:scaleX(1.0831);">Dinje</span><span class="t" id="t94" style="top:1536.4px;font-size:47px;color:#111;right:2639.20px;transform-origin:100% 84.65%;transform:scaleX(1.0393);">120</span><span class="t" id="t95" style="top:1606.7px;font-size:47px;color:#111;left:92.50px;transform-origin:0 84.65%;transform:scaleX(1.1212);">Grejpfrut</span><span class="t" id="t96" style="top:1606.7px;font-size:47px;color:#111;right:2639.20px;transform-origin:100% 84.65%;transform:scaleX(1.0425);">40</span><span class="t" id="t97" style="top:1677.0px;font-size:47px;color:#111;left:92.50px;transform-origin:0 84.65%;transform:scaleX(1.0624);">Limun</span><span class="t" id="t98" style="top:1677.0px;font-size:47px;color:#111;right:2639.20px;transform-origin:100% 84.65%;transform:scaleX(1.0425);">20</span><span class="t" id="t99" style="top:1747.3px;font-size:47px;color:#111;left:92.50px;transform-origin:0 84.65%;transform:scaleX(0.9548);">UKUPNO</span><span class="t" id="t100" style="top:1747.3px;font-size:47px;color:#111;right:2639.20px;transform-origin:100% 84.65%;transform:scaleX(1.0393);">512</span><span class="t" id="t101" style="top:1114.5px;font-size:47px;color:#111;right:2421.00px;transform-origin:100% 84.65%;transform:scaleX(0.9947);">70</span><span class="t" id="t102" style="top:1184.8px;font-size:47px;color:#111;right:2420.20px;transform-origin:100% 84.65%;transform:scaleX(0.9717);">125</span><span class="t" id="t103" style="top:1255.1px;font-size:47px;color:#111;right:2420.20px;transform-origin:100% 84.65%;transform:scaleX(1.0170);">110</span><span class="t" id="t104" style="top:1325.4px;font-size:47px;color:#111;right:2420.20px;transform-origin:100% 84.65%;transform:scaleX(0.9717);">75</span><span class="t" id="t105" style="top:1395.8px;font-size:47px;color:#111;right:2420.20px;transform-origin:100% 84.65%;transform:scaleX(0.9717);">150</span><span class="t" id="t106" style="top:1466.1px;font-size:47px;color:#111;right:2420.20px;transform-origin:100% 84.65%;transform:scaleX(0.9717);">250</span><span class="t" id="t107" style="top:1536.4px;font-size:47px;color:#111;right:2420.20px;transform-origin:100% 84.65%;transform:scaleX(0.9717);">40</span><span class="t" id="t108" style="top:1606.7px;font-size:47px;color:#111;right:2420.20px;transform-origin:100% 84.65%;transform:scaleX(0.9717);">280</span><span class="t" id="t109" style="top:1677.0px;font-size:47px;color:#111;right:2420.20px;transform-origin:100% 84.65%;transform:scaleX(0.9717);">250</span><span class="t" id="t110" style="top:1114.5px;font-size:47px;color:#111;right:2202.50px;transform-origin:100% 84.65%;transform:scaleX(1.0042);">3850</span><span class="t" id="t111" style="top:1114.5px;font-size:47px;color:#111;right:1952.00px;transform-origin:100% 84.65%;transform:scaleX(0.9905);">5.83%</span><div style="left:369px;top:1100px;width:5px;height:634px;background:#fff;"></div><div style="left:94px;top:1096.6px;width:272px;height:4.3px;background:#7b54ac;"></div><div style="left:94.7px;top:1731.7px;width:272.3px;height:4.8px;background:#7b54ac;"></div><div style="left:373.8px;top:1109.7px;width:4.3px;height:614.7px;background:#7b54ac;"></div><div style="left:369px;top:1094.1px;width:12px;height:12px;background:#7b54ac;"></div><div style="left:369.3px;top:1727.3px;width:11.7px;height:11.6px;background:#7b54ac;"></div><div style="left:87px;top:1094.5px;width:5.4px;height:9.5px;background:#7b54ac;"></div><div style="left:87px;top:1728px;width:5.4px;height:10px;background:#7b54ac;"></div><div style="left:834.5px;top:951px;width:225px;height:152.7px;border:4.6px solid;border-color:#b93a42 #96484b #93484a #be383f;"></div><div style="left:831.3px;top:948px;width:14px;height:14px;background:#c6363c;border:1px solid #fff;"></div><div style="left:1049.4px;top:948px;width:14px;height:14px;background:#c6363c;border:1px solid #fff;"></div><div style="left:831.3px;top:1093.3px;width:14px;height:14px;background:#c6363c;border:1px solid #fff;"></div><div style="left:1049.3px;top:1093.3px;width:14px;height:14px;background:#c6363c;border:1px solid #fff;"></div><div style="left:834.7px;top:1109.2px;width:4.8px;height:79.5px;background:#1070c8;"></div><div style="left:1055.4px;top:1109.2px;width:4.8px;height:79.5px;background:#2a6699;"></div><div style="left:3182px;top:762px;width:67px;height:1846px;background:#f5f5f5;"></div><svg style="left:3201.5px;top:778px;" width="35" height="26" viewBox="0 0 35 26"><path d="M17.5 3.5 L33 23 H2 Z" fill="#6e6e6e" stroke="#6e6e6e" stroke-width="3" stroke-linejoin="round"/></svg><div style="left:3204.3px;top:823px;width:28.5px;height:1653px;background:#727272;border-radius:14px;"></div><svg style="left:3201.5px;top:2570.5px;" width="35" height="26" viewBox="0 0 35 26"><path d="M17.5 22.5 L33 3 H2 Z" fill="#6e6e6e" stroke="#6e6e6e" stroke-width="3" stroke-linejoin="round"/></svg><div style="left:758.5px;top:1190px;width:1747.5px;height:1052px;background:#fff;border:5px solid #dadada;border-left:none;"></div><div style="left:758.5px;top:1193.5px;width:1750px;height:1051px;border:2.6px solid #606060;"></div><span class="t" id="t112" style="top:1241.6px;font-size:61px;color:#595959;left:1630.00px;transform-origin:50% 84.65%;transform:translateX(-50%) scaleX(0.9468);">Zarada</span><div style="left:941px;top:1370px;width:1511px;height:3px;background:#d9d9d9;"></div><span class="t" id="t113" style="top:1351.4px;font-size:38px;color:#595959;right:2351.00px;transform-origin:100% 84.65%;transform:scaleX(1.0457);">25000</span><div style="left:941px;top:1501px;width:1511px;height:3px;background:#d9d9d9;"></div><span class="t" id="t114" style="top:1481.9px;font-size:38px;color:#595959;right:2351.00px;transform-origin:100% 84.65%;transform:scaleX(1.0457);">20000</span><div style="left:941px;top:1631px;width:1511px;height:3px;background:#d9d9d9;"></div><span class="t" id="t115" style="top:1611.9px;font-size:38px;color:#595959;right:2351.00px;transform-origin:100% 84.65%;transform:scaleX(1.0457);">15000</span><div style="left:941px;top:1761px;width:1511px;height:3px;background:#d9d9d9;"></div><span class="t" id="t116" style="top:1741.9px;font-size:38px;color:#595959;right:2351.00px;transform-origin:100% 84.65%;transform:scaleX(1.0457);">10000</span><div style="left:941px;top:1891px;width:1511px;height:3px;background:#d9d9d9;"></div><span class="t" id="t117" style="top:1871.9px;font-size:38px;color:#595959;right:2351.00px;transform-origin:100% 84.65%;transform:scaleX(1.0457);">5000</span><div style="left:941px;top:2020px;width:1511px;height:3px;background:#d9d9d9;"></div><span class="t" id="t118" style="top:2001.4px;font-size:38px;color:#595959;right:2351.00px;transform-origin:100% 84.65%;transform:scaleX(1.0457);">0</span><div style="left:999px;top:1921px;width:51px;height:98px;background:#5b9bd5;"></div><div style="left:1167px;top:1940px;width:51px;height:79px;background:#5b9bd5;"></div><div style="left:1334px;top:1815px;width:53px;height:204px;background:#5b9bd5;"></div><div style="left:1502px;top:1894px;width:53px;height:125px;background:#5b9bd5;"></div><div style="left:1670px;top:1884px;width:53px;height:135px;background:#5b9bd5;"></div><div style="left:1838px;top:1501px;width:53px;height:518px;background:#5b9bd5;"></div><div style="left:2006px;top:1896px;width:51px;height:123px;background:#5b9bd5;"></div><div style="left:2173px;top:1730px;width:53px;height:289px;background:#5b9bd5;"></div><div style="left:2341px;top:1891px;width:53px;height:128px;background:#5b9bd5;"></div><span class="t" id="t119" style="top:2045.5px;font-size:36px;color:#595959;right:2214.06px;transform-origin:100% 84.65%;transform:rotate(-45deg) scaleX(1.1371);">Jabuke</span><span class="t" id="t120" style="top:2045.5px;font-size:36px;color:#595959;right:2046.17px;transform-origin:100% 84.65%;transform:rotate(-45deg) scaleX(1.1156);">Kruške</span><span class="t" id="t121" style="top:2045.5px;font-size:36px;color:#595959;right:1878.28px;transform-origin:100% 84.65%;transform:rotate(-45deg) scaleX(1.1199);">Banane</span><span class="t" id="t122" style="top:2045.5px;font-size:36px;color:#595959;right:1710.39px;transform-origin:100% 84.65%;transform:rotate(-45deg) scaleX(1.1112);">Breskve</span><span class="t" id="t123" style="top:2045.5px;font-size:36px;color:#595959;right:1542.50px;transform-origin:100% 84.65%;transform:rotate(-45deg) scaleX(1.1520);">Grožđe</span><span class="t" id="t124" style="top:2045.5px;font-size:36px;color:#595959;right:1374.61px;transform-origin:100% 84.65%;transform:rotate(-45deg) scaleX(1.1339);">Narandže</span><span class="t" id="t125" style="top:2045.5px;font-size:36px;color:#595959;right:1206.72px;transform-origin:100% 84.65%;transform:rotate(-45deg) scaleX(1.1946);">Dinje</span><span class="t" id="t126" style="top:2045.5px;font-size:36px;color:#595959;right:1038.83px;transform-origin:100% 84.65%;transform:rotate(-45deg) scaleX(1.2210);">Grejpfrut</span><span class="t" id="t127" style="top:2045.5px;font-size:36px;color:#595959;right:870.94px;transform-origin:100% 84.65%;transform:rotate(-45deg) scaleX(1.1423);">Limun</span><div style="left:740.0px;top:1174.5px;width:41px;height:41px;border-radius:21px;border:6.5px solid #636363;background:#fff;"></div><div style="left:1613.0px;top:1174.5px;width:41px;height:41px;border-radius:21px;border:6.5px solid #636363;background:#fff;"></div><div style="left:2486.5px;top:1174.5px;width:41px;height:41px;border-radius:21px;border:6.5px solid #636363;background:#fff;"></div><div style="left:740.0px;top:1698.5px;width:41px;height:41px;border-radius:21px;border:6.5px solid #636363;background:#fff;"></div><div style="left:2486.5px;top:1698.5px;width:41px;height:41px;border-radius:21px;border:6.5px solid #636363;background:#fff;"></div><div style="left:740.0px;top:2222.5px;width:41px;height:41px;border-radius:21px;border:6.5px solid #636363;background:#fff;"></div><div style="left:1613.0px;top:2222.5px;width:41px;height:41px;border-radius:21px;border:6.5px solid #636363;background:#fff;"></div><div style="left:2486.5px;top:2222.5px;width:41px;height:41px;border-radius:21px;border:6.5px solid #636363;background:#fff;"></div><div style="left:2550px;top:1191.3px;width:100.6px;height:101px;background:#fff;border:2.4px solid #4d4d4d;"></div><div style="left:2550px;top:1329.6px;width:100.6px;height:101px;background:#fff;border:2.4px solid #4d4d4d;"></div><div style="left:2550px;top:1468.2px;width:100.6px;height:101px;background:#fff;border:2.4px solid #4d4d4d;"></div><svg style="left:2550px;top:1191.3px;" width="101" height="101" viewBox="0 0 101 101"><path d="M45.7 10.2 V87.3 M6.7 48.7 H84.2" stroke="#45a360" stroke-width="3.8" fill="none"/></svg><svg style="left:2550px;top:1329.6px;" width="101" height="101" viewBox="0 0 101 101">
<path d="M37.5 57 C52 40 72 21 83 15.5 C86.5 14 88 16 86.5 19.5 C81 31 62 51 46.5 65.5 Z" fill="#fff" stroke="#444" stroke-width="2.8" stroke-linejoin="round"/>
<path d="M37.5 56.5 C30 54 24 60 22.5 67 C21 74 13 76 6 75 C14 84 30 88 41 81 C47 77 49 70 47 65 Z" fill="#5fa2e6" stroke="#1e6fbf" stroke-width="2.8" stroke-linejoin="round"/>
</svg><svg style="left:2550px;top:1468.2px;" width="101" height="101" viewBox="0 0 101 101">
<path d="M8.6 11.8 H82.8 V25.6 L52.6 54.5 V88.8 H38.8 V54.5 L8.6 25.6 Z" fill="#f4f4f4" stroke="#444" stroke-width="3.4" stroke-linejoin="miter"/>
</svg><div style="left:0px;top:2608px;width:3251px;height:82px;background:#f5f5f5;"></div><div style="left:0px;top:2608px;width:3181px;height:3px;background:#b2b2b2;"></div><div style="left:1904px;top:2611px;width:84px;height:79px;background:#f0f0f0;"></div><svg style="left:58px;top:2632px;" width="22" height="30" viewBox="0 0 22 30"><path d="M19 3 L4 15 L19 27 Z" fill="#c6c6c6"/></svg><svg style="left:143px;top:2632px;" width="22" height="30" viewBox="0 0 22 30"><path d="M3 3 L18 15 L3 27 Z" fill="#c6c6c6"/></svg><div style="left:277px;top:2607px;width:215px;height:76px;background:#fff;border-left:2px solid #c8c8c8;border-right:2px solid #c8c8c8;"></div><div style="left:277px;top:2678px;width:215px;height:5px;background:#107c41;"></div><span class="t" id="t128" style="top:2622.1px;font-size:46px;color:#1e7145;font-weight:700;left:305.98px;transform-origin:0 84.65%;transform:scaleX(1.0183);">Sheet1</span><svg style="left:585.6px;top:2620.4px;" width="56" height="56" viewBox="0 0 56 56"><circle cx="28" cy="28" r="25" stroke="#7a7a7a" stroke-width="2.8" fill="none"/><path d="M28 15.5 V40.5 M15.5 28 H40.5" stroke="#444" stroke-width="4"/></svg><div style="left:1940.3px;top:2629.6px;width:7.2px;height:7.2px;background:#9c9c9c;"></div><div style="left:1940.3px;top:2644.0px;width:7.2px;height:7.2px;background:#9c9c9c;"></div><div style="left:1940.3px;top:2658.8px;width:7.2px;height:7.2px;background:#9c9c9c;"></div><svg style="left:2004px;top:2630px;" width="28" height="34" viewBox="0 0 28 34"><path d="M24 4 L5 17 L24 30 Z" fill="#6e6e6e" stroke="#6e6e6e" stroke-width="3" stroke-linejoin="round"/></svg><div style="left:2049px;top:2632px;width:991px;height:30px;background:#747474;border-radius:15px;"></div><svg style="left:3142px;top:2630px;" width="28" height="34" viewBox="0 0 28 34"><path d="M4 4 L23 17 L4 30 Z" fill="#6e6e6e" stroke="#6e6e6e" stroke-width="3" stroke-linejoin="round"/></svg><div style="left:0px;top:2690px;width:3251px;height:76px;background:#f0f0f0;"></div><div style="left:0px;top:2689.7px;width:3251px;height:3px;background:#fafafa;"></div><span class="t" id="t129" style="top:2712.3px;font-size:41px;color:#3a3a3a;left:13.36px;transform-origin:0 84.65%;transform:scaleX(0.8792);">Ready</span><svg style="left:184px;top:2702px;" width="58" height="60" viewBox="0 0 58 60">
<circle cx="27" cy="11" r="5.6" stroke="#333" stroke-width="2.6" fill="none"/>
<path d="M5 15 Q16 24 27 22 Q38 24 49 15 M27 22 Q27 32 24 38 L14 54 M25 37 L33 45" stroke="#333" stroke-width="8" fill="none" stroke-linecap="round" stroke-linejoin="round"/>
<path d="M5 15 Q16 24 27 22 Q38 24 49 15 M27 22 Q27 32 24 38 L14 54 M25 37 L33 45" stroke="#f0f0f0" stroke-width="3" fill="none" stroke-linecap="round" stroke-linejoin="round"/>
<path d="M31 37 L53 57 M53 37 L31 57" stroke="#f0f0f0" stroke-width="7" stroke-linecap="round"/>
<path d="M32 38 L53 57 M53 38 L32 57" stroke="#333" stroke-width="2.8" stroke-linecap="round"/>
</svg><span class="t" id="t130" style="top:2712.3px;font-size:41px;color:#3a3a3a;left:253.00px;transform-origin:0 84.65%;transform:scaleX(0.9039);">Accessibility: Investigate</span><span class="t" id="t131" style="top:2712.3px;font-size:41px;color:#3a3a3a;left:1218.00px;transform-origin:0 84.65%;transform:scaleX(0.9215);">Average: 7335.555556</span><span class="t" id="t132" style="top:2712.3px;font-size:41px;color:#3a3a3a;left:1650.16px;transform-origin:0 84.65%;transform:scaleX(0.9200);">Count: 20</span><span class="t" id="t133" style="top:2712.3px;font-size:41px;color:#3a3a3a;left:1868.08px;transform-origin:0 84.65%;transform:scaleX(0.9211);">Sum: 66020</span><div style="left:2134px;top:2692px;width:145px;height:74px;background:#dcdcdc;"></div><svg style="left:2182px;top:2707px;" width="48" height="46" viewBox="0 0 48 46"><path d="M2 2 H46 V44 H2 Z M2 16 H46 M2 30 H46 M16.5 2 V44 M31.5 2 V44" stroke="#222" stroke-width="3.4" fill="none"/></svg><svg style="left:2327px;top:2707px;" width="54" height="46" viewBox="0 0 54 46"><path d="M2 2 H52 V44 H2 Z" stroke="#222" stroke-width="3.4" fill="none"/><path d="M14 10 H40 V37 H14 Z M20 18 H34 M20 24 H34 M20 30 H34" stroke="#222" stroke-width="3" fill="none"/></svg><svg style="left:2472px;top:2707px;" width="54" height="46" viewBox="0 0 54 46"><path d="M2 2 H52 V44 H2 Z M20 2 V22 H2 M20 22 H34 V2" stroke="#222" stroke-width="3.4" fill="none"/></svg><div style="left:2591px;top:2729px;width:28px;height:3px;background:#444;"></div><div style="left:2640px;top:2729px;width:359px;height:3px;background:#5a5a5a;"></div><div style="left:2810px;top:2710px;width:18px;height:42px;background:#5f5f5f;border-radius:2px;"></div><svg style="left:3017px;top:2715px;" width="30" height="30" viewBox="0 0 30 30"><path d="M15 1 V29 M1 15 H29" stroke="#444" stroke-width="3"/></svg><span class="t" id="t134" style="top:2712.3px;font-size:41px;color:#3a3a3a;left:3090.19px;transform-origin:0 84.65%;transform:scaleX(0.9362);">100%</span>
</div></body></html>
